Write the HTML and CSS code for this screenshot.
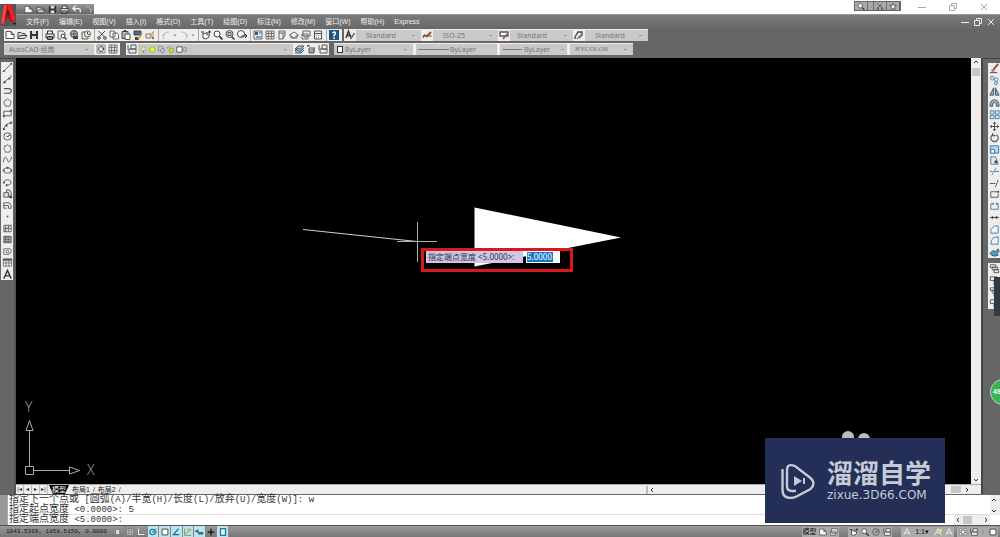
FILE: index.html
```html
<!DOCTYPE html>
<html lang="zh-CN">
<head>
<meta charset="utf-8">
<title>AutoCAD</title>
<link rel="stylesheet" href="styles.css">
</head>
<body>
<svg class="defs" aria-hidden="true">
  <symbol id="new" viewBox="0 0 12 12"><path d="M2 2.5h5l3 3v4H2zM7 2.5v3h3" fill="#fff" stroke="#555"/></symbol>
  <symbol id="open" viewBox="0 0 12 12"><path d="M2 9.5v-6h3l1 1h3v2M2 9.500l2-3h7l-2.500 3z" fill="#ddd" stroke="#444"/></symbol>
  <symbol id="save" viewBox="0 0 12 12"><path d="M2 2h8v8H2z" fill="#333"/><path d="M4 2h4v3H4zM4 7h4v3H4z" fill="#ddd"/></symbol>
  <symbol id="print" viewBox="0 0 12 12"><path d="M3.500 5V2h5v3M2 5h8v4H2zM3.500 7.500h5v3h-5z" fill="#eee" stroke="#333"/></symbol>
  <symbol id="preview" viewBox="0 0 12 12"><path d="M2 2h5l2 2v2M2 2v8h3" fill="none" stroke="#666"/><circle cx="7" cy="7" r="2" fill="#fff" stroke="#333"/><path d="M8.500 8.500l2 2" stroke="#333" stroke-width="1.500"/></symbol>
  <symbol id="publish" viewBox="0 0 12 12"><circle cx="6" cy="5" r="3.500" fill="#bbb" stroke="#444"/><path d="M3 5h6M6 2v6" stroke="#555"/><path d="M5 7h5v3H5z" fill="#444"/></symbol>
  <symbol id="dwf" viewBox="0 0 12 12"><path d="M2 3h6v7H2z" fill="#e6e0ba" stroke="#666"/><circle cx="7.500" cy="5" r="3" fill="#eee" stroke="#666"/><path d="M7.500 3v2l2 1" fill="none" stroke="#444"/></symbol>
  <symbol id="cut" viewBox="0 0 12 12"><path d="M2.500 2l6 6M9 2L3 8" stroke="#444"/><circle cx="3" cy="9" r="1.300" fill="none" stroke="#444"/><circle cx="9" cy="9" r="1.300" fill="none" stroke="#444"/></symbol>
  <symbol id="copy" viewBox="0 0 12 12"><path d="M2 2h4l1 1v5H2zM5 4h4l1.500 1.500V10H5z" fill="#fff" stroke="#666"/></symbol>
  <symbol id="paste" viewBox="0 0 12 12"><path d="M2 2.500h6v7H2z" fill="#bbb" stroke="#444"/><path d="M5 5h5v5.500H5z" fill="#fff" stroke="#555"/><path d="M4 2h2" stroke="#333" stroke-width="2"/></symbol>
  <symbol id="match" viewBox="0 0 12 12"><path d="M2 2h7v4H2z" fill="#456d94" stroke="#444"/><path d="M3 8h4v3H3z" fill="#444"/><path d="M10 5L6 10" stroke="#db9b3e" stroke-width="2"/></symbol>
  <symbol id="block" viewBox="0 0 12 12"><path d="M2 5h5v4H2z" fill="#f3e7bc" stroke="#777"/><path d="M10 2L6 7M9 3v7" stroke="#c29a45"/><circle cx="9" cy="9" r="1" fill="#555"/></symbol>
  <symbol id="undo" viewBox="0 0 12 12"><path d="M4 10C2 6 4 3 9 3M5 5L2.500 7" fill="none" stroke="#b8b8b8"/></symbol>
  <symbol id="redo" viewBox="0 0 12 12"><path d="M8 10c2-4 0-7-5-7M7 5l3 2" fill="none" stroke="#b8b8b8"/></symbol>
  <symbol id="back" viewBox="0 0 12 12"><path d="M3 5h5q3 0 2 4M5 2L2 5l3 3" fill="none" stroke="#eee" stroke-width="1.500"/></symbol>
  <symbol id="down" viewBox="0 0 6 12"><path d="M1.500 5.500h3L3 7.500z" fill="#888"/></symbol>
  <symbol id="pan" viewBox="0 0 12 12"><path d="M3 4v5l3 1 3-2V5L7 6V3L5 5z" fill="#fff" stroke="#444"/><path d="M8 3h3M9.500 1.500v3M1 3h3" stroke="#333"/></symbol>
  <symbol id="zoom" viewBox="0 0 12 12"><circle cx="5" cy="5" r="3" fill="#fff" stroke="#444"/><path d="M7.500 7.500l3 3" stroke="#333" stroke-width="1.700"/></symbol>
  <symbol id="zoomwin" viewBox="0 0 12 12"><circle cx="5.500" cy="5" r="3.500" fill="#ddd" stroke="#555"/><path d="M4 3.500h3v3H4z" fill="none" stroke="#555"/><path d="M8 8l2.500 2.500" stroke="#333" stroke-width="1.500"/></symbol>
  <symbol id="zoomprev" viewBox="0 0 12 12"><circle cx="5" cy="5" r="3.500" fill="#fff" stroke="#444"/><path d="M5 7h6M9 5l2 2-2 2" fill="none" stroke="#333"/></symbol>
  <symbol id="props" viewBox="0 0 12 12"><path d="M2 2h8v8H2z" fill="#e8f1f7" stroke="#666"/><path d="M3 3h3v3H3z" fill="#286096"/><path d="M7 4h2M4 8h5" stroke="#444"/></symbol>
  <symbol id="grid" viewBox="0 0 12 12"><path d="M2 2h8v8H2zM2 4.500h8M2 7.500h8M4.500 2v8M7.500 2v8" fill="#ddd" stroke="#777"/></symbol>
  <symbol id="palette" viewBox="0 0 12 12"><path d="M3 2h6v4L7 10H3zM3 4h6M7 4v6" fill="#eee" stroke="#666"/></symbol>
  <symbol id="sheet" viewBox="0 0 12 12"><path d="M1.500 6L6 3l4.500 3L6 9zM3 7v2h6V6" fill="#eee" stroke="#666"/></symbol>
  <symbol id="markup" viewBox="0 0 12 12"><path d="M3 2h7v5H3zM2 5h6v5H2zM4 8h3" fill="#eee" stroke="#666"/></symbol>
  <symbol id="calc" viewBox="0 0 12 12"><path d="M2.500 2h7v8h-7zM2.500 4.500h7" fill="#eee" stroke="#555"/><path d="M4 6.500h4M4 8.500h4" stroke="#999" stroke-dasharray="1 1"/></symbol>
  <symbol id="help" viewBox="0 0 12 12"><path d="M1 1h10v10H1z" fill="#1d567e"/><path d="M4.500 4q2-2 3 0 0 1-1.500 2.500v1M6 8.500V10" fill="none" stroke="#fff" stroke-width="1.500"/></symbol>
  <symbol id="gear" viewBox="0 0 12 12"><path d="M2 2h8v8H2z" fill="#eee" stroke="#888"/><circle cx="6" cy="6" r="2.500" fill="none" stroke="#444" stroke-width="1.500" stroke-dasharray="1.300 .7"/></symbol>
  <symbol id="layers" viewBox="0 0 12 12"><path d="M2 6l3-3h6L8 6zM2 8l3-3M2 8h6l3-3M2 10h6l3-3" fill="#a8c5d9" stroke="#456"/></symbol>
  <symbol id="layerprev" viewBox="0 0 12 12"><path d="M2 3h3M2 3l2-1M4 5h6M4 7h6M4 9h5M4 5v5h5V5" fill="none" stroke="#555"/></symbol>
  <symbol id="layerstate" viewBox="0 0 12 12"><path d="M5 2h5v4H5zM3 6h7v4H3zM2 2v5" fill="#eee" stroke="#555"/></symbol>
  <symbol id="style" viewBox="0 0 12 12"><path d="M2 9l2.500-7L7 9M3 6.500h3" fill="none" stroke="#333" stroke-width="1.400"/><path d="M10.500 4L6.500 10" stroke="#9b6340" stroke-width="1.600"/></symbol>
  <symbol id="dimstyle" viewBox="0 0 12 12"><path d="M1.500 7h9M2 9l2-4" stroke="#444"/><path d="M10 3L5 8" stroke="#a34a35" stroke-width="2"/></symbol>
  <symbol id="tablestyle" viewBox="0 0 12 12"><path d="M2 3h8v4H2z" fill="#fff" stroke="#555" stroke-width="1.400"/><path d="M9 5l-4 5" stroke="#996448" stroke-width="2"/></symbol>
  <symbol id="leader" viewBox="0 0 12 12"><path d="M2 10V8l3-5h4v3L6 9" fill="none" stroke="#444" stroke-width="1.300"/><path d="M9 5l-5 5" stroke="#a76f51" stroke-width="1.500"/></symbol>
  <symbol id="bulb" viewBox="0 0 12 12"><circle cx="6" cy="5" r="2.700" fill="#eef09a" stroke="#a4a661"/><path d="M5 8h2v2H5z" fill="#777"/></symbol>
  <symbol id="sun" viewBox="0 0 12 12"><circle cx="6" cy="6" r="3.700" fill="#e9ef3c" stroke="#9da226"/></symbol>
  <symbol id="freeze" viewBox="0 0 12 12"><path d="M2 2h6v6H2z" fill="#bacfd9" stroke="#6f8c9b"/><circle cx="7.500" cy="7.500" r="2.500" fill="#cad8df" stroke="#668"/></symbol>
  <symbol id="lock" viewBox="0 0 12 12"><path d="M2 5V3q2-2 4 0v2" fill="none" stroke="#99a020"/><circle cx="7" cy="7" r="3" fill="#d7dc37" stroke="#8a9225"/></symbol>
  <symbol id="swatch" viewBox="0 0 12 12"><path d="M2.500 2.500h7v7h-7z" fill="#fff" stroke="#333"/></symbol>
  <symbol id="line" viewBox="0 0 12 12"><path d="M2 10l8-8" stroke="#555"/><path d="M1 9h2v2H1zM9 1h2v2H9z" fill="#555"/></symbol>
  <symbol id="xline" viewBox="0 0 12 12"><path d="M1 10l10-8" stroke="#666"/><path d="M2 8h2v2H2zM7 4h2v2H7z" fill="#444"/></symbol>
  <symbol id="pline" viewBox="0 0 12 12"><path d="M2 4h5q4 0 3 3T6 9H2" fill="none" stroke="#555" stroke-width="1.300"/></symbol>
  <symbol id="polygon" viewBox="0 0 12 12"><path d="M6 2l4 3-1.500 5h-5L2 5z" fill="none" stroke="#666"/></symbol>
  <symbol id="rect" viewBox="0 0 12 12"><path d="M2 3.500h8v5H2z" fill="none" stroke="#555"/><path d="M1 8h2v2H1zM9 2h2v2H9z" fill="#555"/></symbol>
  <symbol id="arc" viewBox="0 0 12 12"><path d="M2 10q1-6 8-7" fill="none" stroke="#555"/><path d="M1 9h2v2H1zM4 5h2v2H4zM9 2h2v2H9z" fill="#444"/></symbol>
  <symbol id="circle" viewBox="0 0 12 12"><circle cx="6" cy="6" r="4" fill="none" stroke="#555"/><path d="M6 6l3-2M5 6h2" stroke="#444"/></symbol>
  <symbol id="cloud" viewBox="0 0 12 12"><path d="M4 3q2-2 3 0 3-1 2 2 2 2 0 3 0 3-3 2-3 1-3-2-2-2 0-3-1-3 1-2z" fill="none" stroke="#666"/></symbol>
  <symbol id="spline" viewBox="0 0 12 12"><path d="M1.500 9C3 0 5 4 6 7s3 2 4.500-4" fill="none" stroke="#555"/></symbol>
  <symbol id="ellipse" viewBox="0 0 12 12"><ellipse cx="6" cy="6" rx="4.500" ry="2.800" fill="none" stroke="#555"/><path d="M1 5h2v2H1zM5 2h2v2H5zM9 5h2v2H9z" fill="#555"/></symbol>
  <symbol id="ellarc" viewBox="0 0 12 12"><path d="M2 5q4-4 8 0 0 4-5 4" fill="none" stroke="#555"/><path d="M1 5h2v2H1zM4 8h2v2H4z" fill="#555"/></symbol>
  <symbol id="insert" viewBox="0 0 12 12"><path d="M2 5h5v5H2zM5 5V2h3l2 3v4H7" fill="#ddd" stroke="#555"/><path d="M8 9h3v2H8z" fill="#333"/></symbol>
  <symbol id="make" viewBox="0 0 12 12"><path d="M2 3h6l2 3v3H7V6H2zM2 6v3h3" fill="none" stroke="#555"/></symbol>
  <symbol id="point" viewBox="0 0 12 12"><circle cx="6" cy="6" r="1" fill="#555"/></symbol>
  <symbol id="hatch" viewBox="0 0 12 12"><path d="M2 2.500h8v7H2zM2 6h8M4 2v8M7 2v8" fill="none" stroke="#666"/><path d="M2 9l8-7" stroke="#777"/></symbol>
  <symbol id="gradient" viewBox="0 0 12 12"><path d="M2 2.500h8v7H2z" fill="#aaa" stroke="#555"/><path d="M3 4h6M3 6h6M3 8h6" stroke="#444" stroke-dasharray="2 1"/></symbol>
  <symbol id="region" viewBox="0 0 12 12"><path d="M2 3h4q5-1 4 3T2 9z" fill="#eee" stroke="#666"/><circle cx="6" cy="6" r="1.500" fill="none" stroke="#666"/></symbol>
  <symbol id="table" viewBox="0 0 12 12"><path d="M1.500 2h9v8h-9zM1.500 6.500h9M4.500 3v7M7.500 3v7" fill="#eee" stroke="#777"/><path d="M1 3h10" stroke="#555" stroke-width="2"/></symbol>
  <symbol id="text" viewBox="0 0 12 12"><path d="M2 10.500L6 1.500l4 9M3.500 7.500h5" fill="none" stroke="#333" stroke-width="1.500"/></symbol>
  <symbol id="erase" viewBox="0 0 12 12"><path d="M10 1L5 7" stroke="#944a3b" stroke-width="2"/><path d="M2 8l3-2 2 2-3 2z" fill="#d66e53"/><path d="M1 10.500h8" stroke="#444"/></symbol>
  <symbol id="mcopy" viewBox="0 0 12 12"><circle cx="3.500" cy="3.500" r="2" fill="none" stroke="#487c9e"/><circle cx="8" cy="5" r="2" fill="none" stroke="#487c9e"/><circle cx="7.500" cy="9" r="1.700" fill="none" stroke="#487c9e"/></symbol>
  <symbol id="mirror" viewBox="0 0 12 12"><path d="M5 2v8H1zM7 2v8h4z" fill="#8ab1c8" stroke="#456"/></symbol>
  <symbol id="offset" viewBox="0 0 12 12"><path d="M1 9q0-7 5-7t5 7H8q1-4-2-4t-2 4z" fill="#8ab1c8" stroke="#456"/></symbol>
  <symbol id="array" viewBox="0 0 12 12"><path d="M1.500 2h4v3.500h-4zM7 2h4v3.500H7zM1.500 7h4v3.500h-4zM7 7h4v3.500H7z" fill="#dbeaf3" stroke="#477da2"/></symbol>
  <symbol id="move" viewBox="0 0 12 12"><path d="M6 1v10M1 6h10" stroke="#444"/><path d="M4 3l2-2 2 2zM4 9l2 2 2-2zM3 4L1 6l2 2zM9 4l2 2-2 2z" fill="#444"/></symbol>
  <symbol id="rotate" viewBox="0 0 12 12"><path d="M4 3a4 4 0 1 0 4 0M4 1v3h3" fill="none" stroke="#555" stroke-width="1.200"/></symbol>
  <symbol id="scale" viewBox="0 0 12 12"><path d="M1.500 2h9v8h-9z" fill="#b5d4e7" stroke="#3c7ba5"/><path d="M2 6h4v4H2z" fill="#fff" stroke="#3c7ba5"/></symbol>
  <symbol id="stretch" viewBox="0 0 12 12"><path d="M2 2h5l3 8H2z" fill="#e2edf3" stroke="#477da2"/><path d="M6 6h3v3H6z" fill="#446"/></symbol>
  <symbol id="trim" viewBox="0 0 12 12"><path d="M1 6h3M6 6h5M3 10l5-8" stroke="#487c9e"/></symbol>
  <symbol id="extend" viewBox="0 0 12 12"><path d="M1 6h6M7 10l3-8" stroke="#555"/></symbol>
  <symbol id="breakpt" viewBox="0 0 12 12"><path d="M10 3H2v6h8V5" fill="none" stroke="#555"/><path d="M9 2h2v2H9z" fill="#444"/></symbol>
  <symbol id="break" viewBox="0 0 12 12"><path d="M4 3H2v6h8V3H8" fill="none" stroke="#477da2"/><path d="M4 2h1v2H4zM8 2h1v2H8z" fill="#333"/></symbol>
  <symbol id="join" viewBox="0 0 12 12"><path d="M1 6h10" stroke="#666"/><path d="M3 4l3 2-3 2zM9 4L6 6l3 2z" fill="#444"/></symbol>
  <symbol id="chamfer" viewBox="0 0 12 12"><path d="M2 10V6l4-4h4v8z" fill="#eef4f8" stroke="#477da2"/></symbol>
  <symbol id="fillet" viewBox="0 0 12 12"><path d="M2 10q0-8 8-8v8z" fill="#eef4f8" stroke="#477da2"/></symbol>
  <symbol id="explode" viewBox="0 0 12 12"><path d="M1 7l3-3 3 1 3-3 1 3-2 2 1 2-4 1-3-1z" fill="#4f9bc5" stroke="#356"/></symbol>
  <symbol id="order" viewBox="0 0 12 12"><path d="M1.500 2h6v3h-6zM3.500 4.500h6v3h-6zM5.500 7h5v3.500h-5z" fill="#eee" stroke="#555"/></symbol>
  <symbol id="order2" viewBox="0 0 12 12"><path d="M1.500 2h7v4h-7zM5.500 6.500h5v4h-5z" fill="#eee" stroke="#555"/></symbol>
  <symbol id="ortho" viewBox="0 0 12 12"><path d="M3 2v7h7" fill="none" stroke="#eee" stroke-width="1.300"/></symbol>
  <symbol id="snap" viewBox="0 0 12 12"><path d="M3 3h5v6H3z" fill="#ddd" stroke="#777"/></symbol>
  <symbol id="polar" viewBox="0 0 12 12"><circle cx="5.500" cy="6" r="3.300" fill="none" stroke="#187a9b" stroke-width="1.400"/><path d="M5 6h6M5 6l5-4" stroke="#187a9b"/></symbol>
  <symbol id="angle" viewBox="0 0 12 12"><path d="M9 2L3 9h7" fill="none" stroke="#16718e" stroke-width="1.500"/></symbol>
  <symbol id="ducs" viewBox="0 0 12 12"><path d="M2 2v8h8M3 8l7-5" fill="none" stroke="#6d8d45"/><path d="M5 3h4" stroke="#d9ad38" stroke-width="2"/></symbol>
  <symbol id="dyn" viewBox="0 0 12 12"><path d="M1 5h5M4 3v4" stroke="#234"/><path d="M5 6h6v3H5z" fill="#187a9b"/></symbol>
  <symbol id="plus" viewBox="0 0 12 12"><path d="M2 6h8M6 2v8" stroke="#111" stroke-width="1.500"/></symbol>
  <symbol id="qp" viewBox="0 0 12 12"><path d="M3 2h6v8H3z" fill="#e5f3f7" stroke="#187a9b" stroke-width="1.500"/></symbol>
  <symbol id="person" viewBox="0 0 12 12"><path d="M2 10l4-8 4 8M4 7h4" fill="none" stroke="#eee" stroke-width="1.200"/></symbol>
  <symbol id="person-lit" viewBox="0 0 12 12"><path d="M2 10l4-8 4 8M4 7h4" fill="none" stroke="#eee" stroke-width="1.200"/><circle cx="9" cy="4" r="2" fill="#e8da8a"/></symbol>
  <symbol id="min" viewBox="0 0 12 12"><path d="M2 6.500h8" stroke="currentColor"/></symbol>
  <symbol id="restore" viewBox="0 0 12 12"><path d="M2.500 4.500h5v5h-5zM4.500 4.500v-2h5v5h-2" fill="none" stroke="currentColor"/></symbol>
  <symbol id="close" viewBox="0 0 12 12"><path d="M3 3l6 6M9 3L3 9" stroke="currentColor"/></symbol>
  <symbol id="star" viewBox="0 0 12 12"><path d="M6 1.500l1.300 3 3.200.3L8 7l.8 3.200L6 8.500l-2.800 1.700L4 7 1.500 4.800l3.200-.3z" fill="#eee" stroke="#444"/></symbol>
  <symbol id="left" viewBox="0 0 8 8"><path d="M5 2L3 4l2 2" fill="none" stroke="#333"/></symbol>
  <symbol id="right" viewBox="0 0 8 8"><path d="M3 2l2 2-2 2" fill="none" stroke="#333"/></symbol>
  <symbol id="up" viewBox="0 0 8 8"><path d="M2 5l2-2 2 2" fill="none" stroke="#333"/></symbol>
  <symbol id="dn" viewBox="0 0 8 8"><path d="M2 3l2 2 2-2" fill="none" stroke="#333"/></symbol>
</svg>

<header class="titlebar">
  <button class="app-button" aria-label="AutoCAD">
    <svg viewBox="0 0 16 22"><path d="M1 19L4 1l7-1 5 16-5 2-2-4-3 1-1 4z" fill="#b90c12"/><path d="M1 19L4 1h3L4 20z" fill="#ee4b43"/><path d="M6 11l2-5 2 5z" fill="#51191a"/><path d="M7 0h4l5 16-4 1z" fill="#e1252a"/><path d="M13 19h3l-1 2z" fill="#111"/></svg>
  </button>
  <div class="quick">
    <button aria-label="新建"><svg><use href="#new"/></svg></button><button aria-label="打开"><svg><use href="#open"/></svg></button><button aria-label="保存"><svg><use href="#save"/></svg></button><button aria-label="打印"><svg><use href="#print"/></svg></button><button aria-label="放弃"><svg><use href="#back"/></svg></button><button aria-label="重做"><svg><use href="#redo"/></svg></button>
  </div>
  <div class="search"><button aria-label="搜索"><svg><use href="#zoom"/></svg></button><button class="thin" aria-label="更多"><svg><use href="#down"/></svg></button><button aria-label="通讯中心"><svg><use href="#cut"/></svg></button><button aria-label="收藏夹"><svg><use href="#star"/></svg></button></div>
  <div class="window-controls"><button aria-label="最小化"><svg><use href="#min"/></svg></button><button aria-label="还原"><svg><use href="#restore"/></svg></button><button aria-label="关闭"><svg><use href="#close"/></svg></button></div>
</header>

<nav class="menubar">
  <button>文件(F)</button><button>编辑(E)</button><button>视图(V)</button><button>插入(I)</button><button>格式(O)</button><button>工具(T)</button><button>绘图(D)</button><button>标注(N)</button><button>修改(M)</button><button>窗口(W)</button><button>帮助(H)</button><button>Express</button>
  <div class="doc-controls"><button aria-label="最小化图形"><svg><use href="#min"/></svg></button><button aria-label="还原图形"><svg><use href="#restore"/></svg></button><button aria-label="关闭图形"><svg><use href="#close"/></svg></button></div>
</nav>

<section class="toolbars">
  <div class="tool-row">
    <div class="bar">
      <div class="group"><button aria-label="新建"><svg><use href="#new"/></svg></button><button aria-label="打开"><svg><use href="#open"/></svg></button><button aria-label="保存"><svg><use href="#save"/></svg></button></div>
      <div class="group"><button aria-label="打印"><svg><use href="#print"/></svg></button><button aria-label="预览"><svg><use href="#preview"/></svg></button><button aria-label="发布"><svg><use href="#publish"/></svg></button><button aria-label="三维DWF"><svg><use href="#dwf"/></svg></button></div>
      <div class="group"><button aria-label="剪切"><svg><use href="#cut"/></svg></button><button aria-label="复制"><svg><use href="#copy"/></svg></button><button aria-label="粘贴"><svg><use href="#paste"/></svg></button><button aria-label="特性匹配"><svg><use href="#match"/></svg></button><button aria-label="块编辑器"><svg><use href="#block"/></svg></button></div>
      <div class="group"><button aria-label="放弃"><svg><use href="#undo"/></svg></button><button class="thin" aria-label="放弃列表"><svg><use href="#down"/></svg></button><button aria-label="重做"><svg><use href="#redo"/></svg></button><button class="thin" aria-label="重做列表"><svg><use href="#down"/></svg></button></div>
      <div class="group"><button aria-label="平移"><svg><use href="#pan"/></svg></button><button aria-label="缩放"><svg><use href="#zoom"/></svg></button><button aria-label="窗口缩放"><svg><use href="#zoomwin"/></svg></button><button aria-label="上一个"><svg><use href="#zoomprev"/></svg></button></div>
      <div class="group"><button aria-label="特性"><svg><use href="#props"/></svg></button><button aria-label="设计中心"><svg><use href="#grid"/></svg></button><button aria-label="工具选项板"><svg><use href="#palette"/></svg></button><button aria-label="图纸集"><svg><use href="#sheet"/></svg></button><button aria-label="标记集"><svg><use href="#markup"/></svg></button><button aria-label="计算器"><svg><use href="#calc"/></svg></button></div>
      <div class="group"><button aria-label="帮助"><svg><use href="#help"/></svg></button></div>
    </div>
    <div class="bar styles">
      <button aria-label="文字样式"><svg><use href="#style"/></svg></button><select class="wide indent" aria-label="文字样式列表"><option>Standard</option></select>
      <button aria-label="标注样式"><svg><use href="#dimstyle"/></svg></button><select class="wide indent" aria-label="标注样式列表"><option>ISO-25</option></select>
      <button aria-label="表格样式"><svg><use href="#tablestyle"/></svg></button><select class="narrow" aria-label="表格样式列表"><option>Standard</option></select>
      <button aria-label="引线样式"><svg><use href="#leader"/></svg></button><select class="narrow indent" aria-label="引线样式列表"><option>Standard</option></select>
    </div>
  </div>
  <div class="tool-row">
    <div class="bar workspace-bar"><select class="workspaces" aria-label="工作空间"><option>AutoCAD 经典</option></select><button aria-label="工作空间设置"><svg><use href="#gear"/></svg></button><button aria-label="我的工作空间"><svg><use href="#grid"/></svg></button></div>
    <div class="bar layer-bar"><button aria-label="图层特性"><svg><use href="#layerstate"/></svg></button>
      <div class="layer-select"><select aria-label="图层"><option>0</option></select><div class="layer-icons"><svg><use href="#bulb"/></svg><svg><use href="#sun"/></svg><svg><use href="#freeze"/></svg><svg><use href="#lock"/></svg><svg><use href="#swatch"/></svg></div></div>
      <button aria-label="置为当前"><svg><use href="#layers"/></svg></button><button aria-label="上一个图层"><svg><use href="#layerprev"/></svg></button><button aria-label="图层状态"><svg><use href="#layerstate"/></svg></button></div>
    <div class="bar property-bar"><select class="color" aria-label="颜色"><option>ByLayer</option></select><select class="linetype" aria-label="线型"><option>ByLayer</option></select><select class="weight" aria-label="线宽"><option>ByLayer</option></select><select class="plot" aria-label="打印样式"><option>BYCOLOR</option></select></div>
  </div>
</section>

<main class="workspace">
  <aside class="rail left-rail">
    <div class="palette draw"><button aria-label="直线"><svg><use href="#line"/></svg></button><button aria-label="构造线"><svg><use href="#xline"/></svg></button><button aria-label="多段线"><svg><use href="#pline"/></svg></button><button aria-label="多边形"><svg><use href="#polygon"/></svg></button><button aria-label="矩形"><svg><use href="#rect"/></svg></button><button aria-label="圆弧"><svg><use href="#arc"/></svg></button><button aria-label="圆"><svg><use href="#circle"/></svg></button><button aria-label="修订云线"><svg><use href="#cloud"/></svg></button><button aria-label="样条曲线"><svg><use href="#spline"/></svg></button><button aria-label="椭圆"><svg><use href="#ellipse"/></svg></button><button aria-label="椭圆弧"><svg><use href="#ellarc"/></svg></button><button aria-label="插入块"><svg><use href="#insert"/></svg></button><button aria-label="创建块"><svg><use href="#make"/></svg></button><button aria-label="点"><svg><use href="#point"/></svg></button><button aria-label="图案填充"><svg><use href="#hatch"/></svg></button><button aria-label="渐变色"><svg><use href="#gradient"/></svg></button><button aria-label="面域"><svg><use href="#region"/></svg></button><button aria-label="表格"><svg><use href="#table"/></svg></button><button aria-label="多行文字"><svg><use href="#text"/></svg></button></div>
  </aside>
  <div class="document">
    <div class="view">
      <div class="canvas">
        <svg class="drawing" role="img" aria-label="图形">
          <path d="M458.500 149.500L605 179.500 458.500 208.500z" fill="#fff"/>
          <path d="M287 171.500L401 183.500" stroke="#d0d0d0"/>
          <path d="M381 183.500h40M401.500 164v40" stroke="#b0b0b0"/>
        </svg>
        <svg class="ucs" viewBox="0 0 90 90" aria-hidden="true"><path d="M9.500 80.500h8v-8h-8zM13.500 72V36M18 76.500h35M10 36.500l3.500-10 3.500 10zM53.500 73l10 3.500-10 3.500z" fill="none" stroke="#aaa"/></svg>
        <span class="axis y">Y</span><span class="axis x">X</span>
        <div class="prompt"><label for="width">指定端点宽度 &lt;5.0000&gt;:</label><input id="width" value="5.0000"></div>
        <i class="bump"></i><i class="bump second"></i>
      </div>
      <div class="vscroll"><svg><use href="#up"/></svg><i class="thumb"></i><svg class="end"><use href="#dn"/></svg></div>
    </div>
    <div class="tabs">
      <div class="tab-nav"><button aria-label="首个">|◂</button><button aria-label="向前">◂</button><button aria-label="向后">▸</button><button aria-label="末个">▸|</button></div>
      <button class="tab active">模型</button><button class="tab">布局1</button><span>/</span><button class="tab">布局2</button><span>/</span>
      <div class="hscroll"><svg><use href="#left"/></svg><i class="thumb"></i><svg><use href="#right"/></svg></div>
    </div>
  </div>
  <aside class="rail right-rail">
    <div class="palette modify"><button aria-label="删除"><svg><use href="#erase"/></svg></button><button aria-label="复制对象"><svg><use href="#mcopy"/></svg></button><button aria-label="镜像"><svg><use href="#mirror"/></svg></button><button aria-label="偏移"><svg><use href="#offset"/></svg></button><button aria-label="阵列"><svg><use href="#array"/></svg></button><button aria-label="移动"><svg><use href="#move"/></svg></button><button aria-label="旋转"><svg><use href="#rotate"/></svg></button><button aria-label="比例"><svg><use href="#scale"/></svg></button><button aria-label="拉伸"><svg><use href="#stretch"/></svg></button><button aria-label="修剪"><svg><use href="#trim"/></svg></button><button aria-label="延伸"><svg><use href="#extend"/></svg></button><button aria-label="打断于点"><svg><use href="#breakpt"/></svg></button><button aria-label="打断"><svg><use href="#break"/></svg></button><button aria-label="合并"><svg><use href="#join"/></svg></button><button aria-label="倒角"><svg><use href="#chamfer"/></svg></button><button aria-label="圆角"><svg><use href="#fillet"/></svg></button><button aria-label="分解"><svg><use href="#explode"/></svg></button></div>
    <div class="palette order"><button aria-label="前置"><svg><use href="#order"/></svg></button><button aria-label="后置"><svg><use href="#order2"/></svg></button><button aria-label="置于对象之上"><svg><use href="#order"/></svg></button><button aria-label="置于对象之下"><svg><use href="#order2"/></svg></button></div>
    <i class="side-tab"></i><span class="badge">49</span>
  </aside>
</main>

<section class="command">
  <div class="command-grip"></div>
  <div class="command-text">
    <p>指定下一个点或<code> [</code>圆弧<code>(A)/</code>半宽<code>(H)/</code>长度<code>(L)/</code>放弃<code>(U)/</code>宽度<code>(W)]: w</code></p>
    <p>指定起点宽度<code> &lt;0.0000&gt;: 5</code></p>
    <p class="entry"><span>指定端点宽度<code> &lt;5.0000&gt;:</code></span><span class="command-scroll"><svg><use href="#left"/></svg><i class="thumb"></i><svg><use href="#right"/></svg></span></p>
  </div>
  <div class="history-scroll"><svg><use href="#up"/></svg><svg><use href="#dn"/></svg></div>
</section>

<footer class="status">
  <span class="coords">1043.5369, 1858.5150, 0.0000</span>
  <div class="modes"><button aria-label="捕捉"><svg><use href="#snap"/></svg></button><button aria-label="栅格"><svg><use href="#grid"/></svg></button><button aria-label="正交"><svg><use href="#ortho"/></svg></button><button class="on" aria-label="极轴"><svg><use href="#polar"/></svg></button><button class="on" aria-label="对象捕捉"><svg><use href="#swatch"/></svg></button><button class="on" aria-label="对象追踪"><svg><use href="#angle"/></svg></button><button class="on" aria-label="动态UCS"><svg><use href="#ducs"/></svg></button><button class="on" aria-label="动态输入"><svg><use href="#dyn"/></svg></button><button aria-label="线宽"><svg><use href="#plus"/></svg></button><button class="on" aria-label="快捷特性"><svg><use href="#qp"/></svg></button></div>
  <div class="status-right">
    <div class="cluster"><button class="model">模型</button><button aria-label="快速查看布局"><svg><use href="#new"/></svg></button><button aria-label="快速查看图形"><svg><use href="#markup"/></svg></button></div>
    <div class="cluster"><button aria-label="平移"><svg><use href="#pan"/></svg></button><button aria-label="缩放"><svg><use href="#zoom"/></svg></button><button aria-label="控制盘"><svg><use href="#circle"/></svg></button><button aria-label="运动"><svg><use href="#layerstate"/></svg></button></div>
    <div class="tail">
      <div class="cluster"><button aria-label="注释"><svg><use href="#person"/></svg></button><button class="ratio">1:1▾</button><button aria-label="注释可见性"><svg><use href="#person-lit"/></svg></button><button aria-label="自动添加比例"><svg><use href="#person"/></svg></button></div>
      <div class="cluster"><button aria-label="切换工作空间"><svg><use href="#gear"/></svg></button><button aria-label="锁定"><svg><use href="#layerstate"/></svg></button><button class="thin" aria-label="状态栏菜单"><svg><use href="#down"/></svg></button><button aria-label="全屏"><svg><use href="#swatch"/></svg></button></div>
    </div>
  </div>
</footer>

<div class="watermark">
  <svg viewBox="0 0 36 36" aria-hidden="true"><path d="M2.500 6v21q0 8 8 8 3 0 7-2l13-7q6-6 0-11L15 3Q7 0 7 7v16q0 5 5 5h4" fill="none" stroke="#c6cad5" stroke-width="2.400"/><path d="M14 13l8 5-8 5zM23 15h2v6h-2z" fill="#c6cad5"/></svg>
  <div><strong>溜溜自学</strong><span>zixue.3D66.COM</span></div>
</div>
</body>
</html>
```
FILE: styles.css
```css
* { box-sizing: border-box; }
body {
  position: relative;
  display: flex;
  flex-direction: column;
  height: 100vh;
  margin: 0;
  overflow: hidden;
  background: #666;
  font: 7px/10px "Liberation Sans", "Noto Sans CJK SC", sans-serif;
}
button {
  display: flex;
  align-items: center;
  justify-content: center;
  flex: none;
  padding: 0;
  border: 0;
  background: none;
  color: inherit;
  font: inherit;
}
svg { display: block; flex: none; width: 12px; height: 12px; }
.defs { position: absolute; width: 0; height: 0; }

.titlebar { position: relative; display: flex; flex: none; align-items: flex-start; height: 14px; padding-left: 15px; background: #fff; }
.app-button { position: absolute; z-index: 2; top: 4px; left: 0; width: 16px; height: 22px; background: #555; }
.app-button svg { width: 16px; height: 22px; }
.quick { display: flex; align-items: center; width: 79px; height: 10px; margin-top: 4px; padding-left: 7px; background: linear-gradient(#999, #666); }
.quick button { width: 12px; height: 10px; }
.quick svg { width: 11px; height: 11px; }
.search { display: flex; height: 10px; margin: 1px 15px 0 auto; border: 1px solid #666; background: #aaa; }
.search button { width: 13px; border-right: 1px solid #666; }
.search svg { height: 9px; }
.thin, .thin svg, .search .thin { width: 6px; }
.window-controls { display: flex; gap: 19px; padding: 1px 10px 0 0; color: #aaa; }

.menubar { display: flex; flex: none; align-items: center; gap: 10px; height: 15px; padding: 0 3px 0 26px; border-top: 1px solid #999; background: linear-gradient(#7b7b7b, #686868); color: #eee; }
.doc-controls { display: flex; gap: 1px; margin-left: auto; }

.toolbars { display: flex; flex: none; flex-direction: column; gap: 2px; height: 29px; padding-left: 4px; }
.tool-row { display: flex; gap: 2px; height: 12px; }
.bar { display: flex; align-items: center; height: 12px; background: #eee; }
.bar > .group { display: flex; padding-right: 2px; margin-right: 1px; border-right: 1px solid #aaa; }
.bar > .group:last-child { margin: 0; border: 0; }
select {
  height: 11px;
  padding: 0 8px 0 7px;
  border: 0;
  border-radius: 0;
  appearance: none;
  background: linear-gradient(#999, #999) right 6px center / 3px 1px no-repeat #c9c9c9;
  color: #777;
  font: 7px/11px "Noto Sans", "Noto Sans CJK SC", sans-serif;
}
.wide { width: 65px; }
.narrow { width: 63px; }
.workspaces { width: 90px; padding-left: 5px; }
.indent { padding-left: 10px; }
.workspace-bar { padding-right: 1px; }
.layer-bar { margin-left: 4px; }
.workspace-bar button:first-of-type { margin-left: 1px; }
.layer-select { position: relative; display: flex; width: 155px; }
.layer-select select { width: 155px; padding-left: 45px; }
.layer-icons { position: absolute; top: 0; left: 1px; display: flex; }
.layer-icons svg { width: 9px; height: 11px; }
.property-bar { gap: 3px; margin-left: 3px; }
.color { width: 79px; padding-left: 11px; background: linear-gradient(#fff, #fff) 4px center / 4px 5px no-repeat, linear-gradient(#333, #333) 3px center / 6px 7px no-repeat, linear-gradient(#999, #999) right 6px center / 3px 1px no-repeat #c9c9c9; }
.linetype { width: 81px; padding-left: 34px; background: linear-gradient(#777, #777) 2px center / 31px 1px no-repeat #c9c9c9; }
.weight { width: 67px; padding-left: 24px; background: linear-gradient(#777, #777) 3px center / 19px 1px no-repeat, linear-gradient(#999, #999) right 3px center / 3px 1px no-repeat #c9c9c9; }
.plot { width: 63px; padding-left: 5px; font-family: "Liberation Serif", serif; }

.workspace { display: flex; flex: 1; min-height: 0; }
.rail { position: relative; flex: none; border-top: 1px solid #444; background: #666; }
.left-rail { width: 16px; padding: 3px 0 0 1px; border-right: 2px solid #555; }
.right-rail { width: 19px; padding: 4px 0 0 5px; overflow: hidden; border-left: 2px solid #444; }
.palette { display: grid; grid-auto-rows: 1fr; width: 12px; background: #eee; }
.palette svg { width: 11px; height: 11px; }
.draw { height: 218px; }
.modify { height: 195px; }
.order { height: 46px; margin-top: 5px; }
.side-tab { position: absolute; top: 218px; right: 0; width: 6px; height: 39px; background: #323a42; }
.badge { position: absolute; top: 320px; left: 7px; width: 26px; height: 26px; padding-left: 2px; border: 1px solid #ccc; border-radius: 50%; background: #38b553; color: #fff; font-weight: bold; line-height: 24px; }
.document { display: flex; flex: 1; flex-direction: column; min-width: 0; }
.view { display: flex; flex: 1; min-height: 0; }
.canvas { position: relative; flex: 1; overflow: hidden; background: #000; }
.drawing { position: absolute; inset: 0; width: 100%; height: 100%; }
.ucs { position: absolute; bottom: 0; left: 0; width: 90px; height: 90px; }
.axis { position: absolute; color: #aaa; font: 300 14px/14px "Open Sans", sans-serif; }
.axis.y { bottom: 70px; left: 9px; }
.axis.x { bottom: 7px; left: 71px; }
.prompt { position: absolute; top: 190px; left: 405px; display: flex; align-items: flex-start; gap: 3px; width: 152px; height: 24px; padding-left: 2px; border: 3px solid #d9171c; }
.prompt label { width: 97px; height: 12px; padding-left: 2px; background: #cfc7e3; color: #343052; font: 8px/12px "Noto Sans", "Noto Sans CJK SC", sans-serif; white-space: nowrap; }
.prompt input { width: 34px; height: 12px; padding: 0 1px; border: 0; background: linear-gradient(#1877c5, #1877c5) 1px center / 26px 10px no-repeat #fff; color: #fff; font: 8px/12px "Noto Sans", sans-serif; }
.bump { position: absolute; right: 117px; bottom: 38px; width: 12px; height: 15px; border-radius: 6px; background: #bbb; }
.bump.second { right: 101px; bottom: 36px; }
.vscroll { display: flex; flex: none; flex-direction: column; align-items: center; width: 10px; background: #eee; }
.vscroll svg, .hscroll svg, .command-scroll svg, .history-scroll svg { width: 8px; height: 8px; }
.vscroll .thumb { width: 8px; height: 8px; margin-top: 2px; background: #c6c6c6; }
.vscroll .end { margin-top: auto; }
.tabs { display: flex; flex: none; align-items: center; gap: 3px; height: 10px; border-top: 1px solid #aaa; background: #eee; color: #222; line-height: 9px; }
.tab-nav { display: flex; }
.tab-nav button { width: 8px; height: 9px; border-right: 1px solid #bbb; font-size: 6px; }
.tab.active { width: 20px; margin-left: -2px; background: #000; color: #fff; clip-path: polygon(0 0, 100% 0, 80% 100%, 20% 100%); }
.hscroll { display: flex; align-items: center; width: 335px; margin-left: auto; padding-right: 10px; border-left: 2px solid #bbb; }
.hscroll .thumb { width: 10px; height: 7px; margin: 0 2px 0 auto; background: #c6c6c6; }

.command { display: flex; flex: none; height: 31px; border-top: 1px solid #666; background: #fff; }
.command-grip { width: 8px; border-right: 1px solid #aaa; background: #999; }
.command-text { flex: 1; min-width: 0; color: #333; font: 10px/10px "Liberation Mono", "Noto Sans CJK SC", monospace; }
.command-text p { height: 10px; margin: 0; padding-left: 1px; white-space: pre; }
.command-text code { font: 9px/9px "Liberation Mono", monospace; }
.command-text .entry { display: flex; box-shadow: 0 -1px #ddd; }
.command-scroll { display: flex; align-items: center; gap: 1px; width: 36px; margin-left: auto; background: #eee; }
.command-scroll .thumb { width: 9px; height: 8px; margin-right: auto; background: #c6c6c6; }
.history-scroll { display: flex; flex-direction: column; justify-content: space-between; height: 20px; padding: 1px 2px 0 0; background: #eee; }

.status { display: flex; flex: none; align-items: center; height: 12px; padding: 0 2px 0 6px; border-top: 1px solid #555; background: linear-gradient(#999, #777); color: #111; }
.coords { width: 107px; font: 6px/11px "Liberation Mono", monospace; }
.modes { display: flex; width: 116px; }
.modes button { flex: 1; height: 11px; border-right: 1px solid #888; }
.modes .on { background: #bbe4f0; }
.modes svg, .cluster svg { width: 10px; height: 10px; }
.status-right { display: flex; gap: 9px; margin-left: auto; }
.tail { display: flex; gap: 3px; }
.cluster { display: flex; background: #aaa; }
.cluster button { width: 11px; }
.cluster .model { width: 15px; }
.cluster .ratio { width: 20px; }
.cluster .thin { width: 8px; }

.watermark { position: absolute; right: 55px; bottom: 14px; display: flex; gap: 11px; align-items: center; width: 180px; height: 85px; padding-left: 15px; background: #232f57; color: #c6cad5; }
.watermark svg { width: 36px; height: 36px; }
.watermark div { display: flex; flex-direction: column; }
.watermark strong { font: bold 26px/28px "Liberation Sans", "Noto Sans CJK SC", sans-serif; }
.watermark span { font: 12px/14px "DejaVu Sans", sans-serif; }
```
